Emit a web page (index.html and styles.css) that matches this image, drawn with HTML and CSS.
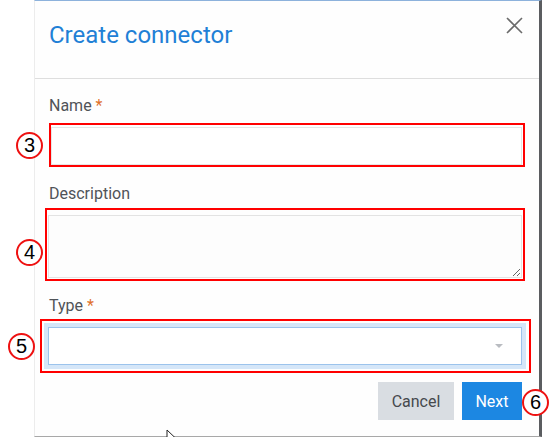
FILE: index.html
```html
<!DOCTYPE html>
<html>

<head>
    <meta charset="utf-8">
    <meta name="viewport" content="width=device-width">
    <link rel="stylesheet" href="styles.css">
</head>

<body>
    <div class="dialog">
        <div class="dialog-header">
            <h1 class="title">Create connector</h1>
            <svg class="close" width="17" height="17" viewBox="0 0 17 17">
                <path d="M1 1 L16 16 M16 1 L1 16" stroke="#6b6b6b" stroke-width="1.6" fill="none" />
            </svg>
        </div>
        <div class="dialog-body">
            <label class="label" for="name">Name <span class="req">*</span></label>
            <div class="mark mark-name">
                <input class="input" type="text" id="name">
                <span class="callout callout-name">3</span>
            </div>

            <label class="label label-desc" for="description">Description</label>
            <div class="mark mark-desc">
                <textarea class="textarea" id="description"></textarea>
                <span class="callout callout-desc">4</span>
            </div>

            <label class="label label-type">Type <span class="req">*</span></label>
            <div class="mark mark-type">
                <div class="select"><span class="caret"></span></div>
                <span class="callout callout-type">5</span>
            </div>

            <div class="actions">
                <button class="btn btn-cancel">Cancel</button>
                <button class="btn btn-next">Next<span class="callout callout-next">6</span></button>
            </div>
        </div>
        <svg class="pointer" width="12" height="18" viewBox="0 0 12 18">
            <path d="M1 1 L1 15 L4.5 11.5 L7 17 L9 16 L6.5 10.5 L11 10.5 Z" fill="#fff" stroke="#222" stroke-width="1" />
        </svg>
    </div>
</body>

</html>
```

FILE: styles.css
```css
body {
    margin: 0;
    font-family: Roboto, "Liberation Sans", sans-serif;
    background: #fff;
}

.dialog {
    position: relative;
    margin-left: 34px;
    width: 508px;
    height: 437px;
    box-sizing: border-box;
    border-top: 1px solid #8db2dc;
    border-left: 1px solid #ececec;
    border-right: 3px solid #5b5d60;
    border-bottom: 1px solid #a8a8a8;
    background: #fefefe;
}

.dialog-header {
    display: flex;
    justify-content: space-between;
    align-items: flex-start;
    height: 77px;
    padding: 0 16px 0 14px;
    border-bottom: 1px solid #dedede;
}

.title {
    margin: 20px 0 0;
    font-size: 24px;
    font-weight: 400;
    line-height: 28px;
    color: #1f80d6;
}

.close {
    margin-top: 16px;
}

.dialog-body {
    display: flex;
    flex-direction: column;
    padding-left: 14px;
}

.label {
    margin-top: 17px;
    font-size: 16px;
    line-height: 20px;
    color: #505358;
}

.label-desc {
    margin-top: 17px;
}

.label-type {
    margin-top: 15px;
}

.req {
    color: #e0712c;
}

.mark {
    position: relative;
    border: 2px solid #ff0000;
}

.mark-name {
    margin: 7px 14px 0 0;
    padding: 2px 1px 0 0;
}

.mark-desc {
    margin: 4px 14px 0 -4px;
    padding: 5px 1px 1px 1px;
}

.mark-type {
    margin: 3px 8px 0 -9px;
    padding: 6px 7px 6px 6px;
}

.input {
    display: block;
    box-sizing: border-box;
    width: 100%;
    height: 38px;
    margin: 0;
    border: 1px solid #e6e6e6;
    background: #fff;
    outline: none;
}

.textarea {
    display: block;
    box-sizing: border-box;
    width: 100%;
    height: 63px;
    margin: 0;
    border: 1px solid #e3e3e3;
    background: #fdfdfd;
    outline: none;
}

.select {
    position: relative;
    box-sizing: border-box;
    height: 38px;
    border: 1px solid #9cc3ec;
    box-shadow: 0 0 0 4px #d5e6f8;
    background: #fff;
}

.caret {
    position: absolute;
    right: 18px;
    top: 16px;
    border-left: 4px solid transparent;
    border-right: 4px solid transparent;
    border-top: 4px solid #b9bcc1;
}

.callout {
    position: absolute;
    box-sizing: border-box;
    width: 27px;
    height: 27px;
    border: 2px solid #ee1111;
    border-radius: 50%;
    background: #fff;
    font-family: "Liberation Sans", Arial, sans-serif;
    font-size: 20px;
    line-height: 23px;
    text-align: center;
    color: #000;
}

.callout-name {
    left: -35px;
    top: 7px;
}

.callout-desc {
    left: -31px;
    top: 29px;
}

.callout-type {
    left: -34px;
    top: 12px;
}

.callout-next {
    left: 60px;
    top: 7px;
}

.actions {
    display: flex;
    justify-content: flex-end;
    gap: 8px;
    margin: 9px 17px 0 0;
}

.btn {
    position: relative;
    height: 38px;
    border: none;
    padding: 0;
    font-family: inherit;
    font-size: 16px;
}

.btn-cancel {
    width: 76px;
    background: #d9dde2;
    color: #46494d;
}

.btn-next {
    width: 60px;
    background: #1c87e2;
    color: #fff;
}

.pointer {
    position: absolute;
    left: 131px;
    top: 428px;
}
```
